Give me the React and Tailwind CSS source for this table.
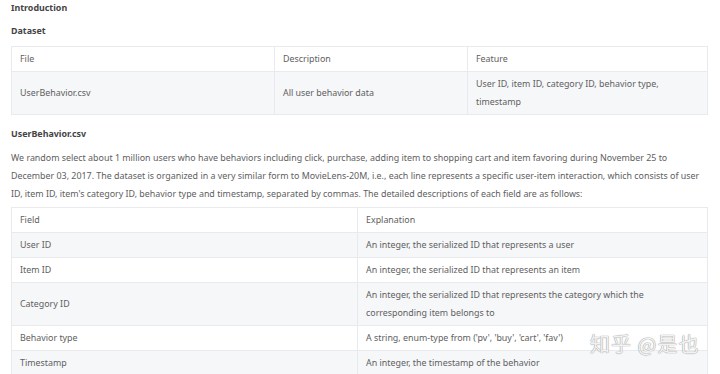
import React from 'react'

const datasetRows = [
  ['UserBehavior.csv', 'All user behavior data', 'User ID, item ID, category ID, behavior type, timestamp'],
]

const fieldRows = [
  ['User ID', 'An integer, the serialized ID that represents a user'],
  ['Item ID', 'An integer, the serialized ID that represents an item'],
  ['Category ID', 'An integer, the serialized ID that represents the category which the corresponding item belongs to'],
  ['Behavior type', "A string, enum-type from ('pv', 'buy', 'cart', 'fav')"],
  ['Timestamp', 'An integer, the timestamp of the behavior'],
]

const cell = 'border border-[#e8eaed] px-[8px] py-[3px] align-middle font-normal text-left'

export default function App() {
  return (
    <div className="relative h-[374px] w-[720px] overflow-hidden bg-white text-[8.9px] leading-[18px] text-[#606060] [font-family:'Noto_Sans','Open_Sans',sans-serif]">
      <div className="pl-[11px] pr-[13px]">
        {/* Headings */}
        <h2 className="h-[16px] leading-[16px] font-bold text-[#444]">Introduction</h2>
        <h3 className="mt-[7px] h-[16px] leading-[16px] font-bold text-[#444]">Dataset</h3>

        <table className="mt-[7px] w-[696px] table-fixed border-collapse">
          <colgroup>
            <col className="w-[263px]" />
            <col className="w-[193px]" />
            <col className="w-[240px]" />
          </colgroup>
          <thead>
            <tr className="bg-white">
              <th className={cell}>File</th>
              <th className={cell}>Description</th>
              <th className={cell}>Feature</th>
            </tr>
          </thead>
          <tbody>
            {datasetRows.map((r) => (
              <tr key={r[0]} className="bg-[#f6f7f9]">
                {r.map((c) => (
                  <td key={c} className={cell}>{c}</td>
                ))}
              </tr>
            ))}
          </tbody>
        </table>

        <h3 className="mt-[11px] h-[16px] leading-[16px] font-bold text-[#444]">UserBehavior.csv</h3>
        <p className="mt-[7px]">
          We random select about 1 million users who have behaviors including click, purchase, adding item to shopping cart and item favoring during November 25 to December 03, 2017. The dataset is organized in a very similar form to MovieLens-20M, i.e., each line represents a specific user-item interaction, which consists of user ID, item ID, item's category ID, behavior type and timestamp, separated by commas. The detailed descriptions of each field are as follows:
        </p>

        <table className="mt-[4px] w-[696px] table-fixed border-collapse">
          <colgroup>
            <col className="w-[346px]" />
            <col className="w-[350px]" />
          </colgroup>
          <thead>
            <tr className="bg-white">
              <th className={cell}>Field</th>
              <th className={cell}>Explanation</th>
            </tr>
          </thead>
          <tbody>
            {fieldRows.map((r, i) => (
              <tr key={r[0]} className={i % 2 === 0 ? 'bg-[#f6f7f9]' : 'bg-white'}>
                <td className={cell}>{r[0]}</td>
                <td className={cell}>{r[1]}</td>
              </tr>
            ))}
          </tbody>
        </table>
      </div>

      {/* watermark */}
      <div className="absolute left-[590px] top-[331px] text-[20px] leading-[26px] tracking-[1px] text-[#f2f2f2] [text-shadow:0_0_1px_#9a9a9a,0_0_1px_#9a9a9a] [font-family:'Noto_Sans_CJK_SC',sans-serif]">
        知乎 @是也
      </div>
    </div>
  )
}
